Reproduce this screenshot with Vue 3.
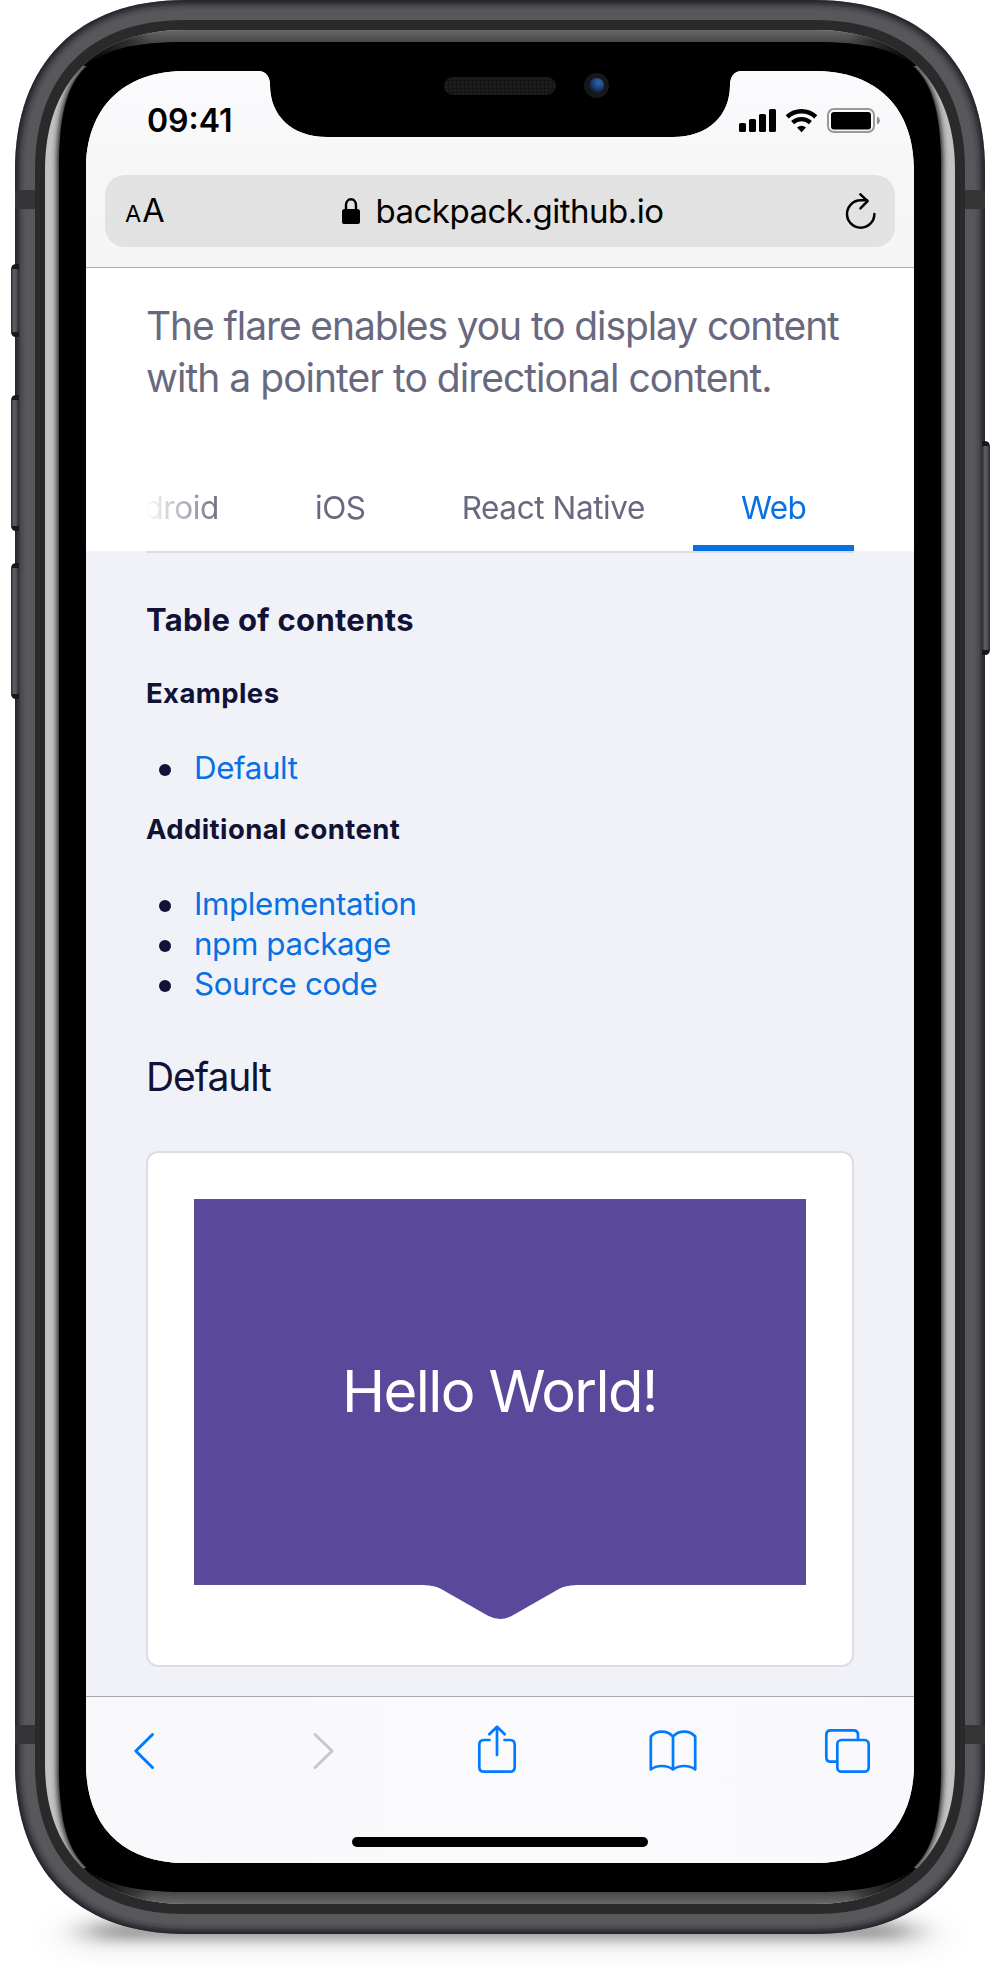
<script setup>
const tabs = ['Android', 'iOS', 'React Native', 'Web']
const activeTab = 'Web'
const additional = ['Implementation', 'npm package', 'Source code']

// Rounded rectangle with continuous-curvature corners: l is the corner's
// extent along x and y, k the distance of the handles from the corner.
function shape(x1, y1, x2, y2, lx, ly, k) {
  return [
    `M${x1 + lx} ${y1}H${x2 - lx}`,
    `C${x2 - k} ${y1} ${x2} ${y1 + k} ${x2} ${y1 + ly}`,
    `V${y2 - ly}`,
    `C${x2} ${y2 - k} ${x2 - k} ${y2} ${x2 - lx} ${y2}`,
    `H${x1 + lx}`,
    `C${x1 + k} ${y2} ${x1} ${y2 - k} ${x1} ${y2 - ly}`,
    `V${y1 + ly}`,
    `C${x1} ${y1 + k} ${x1 + k} ${y1} ${x1 + lx} ${y1}Z`,
  ].join('')
}
const body = shape(15, 0, 985, 1934, 170, 170, 63)
const ring = shape(35, 20, 965, 1914, 150, 150, 55)
const bezel = shape(45, 30, 955, 1904, 140, 140, 52)
const glass = shape(59, 42, 941, 1892, 126, 126, 27)
const buttons = [
  { x: 11, y: 264, h: 73 },
  { x: 11, y: 395, h: 136 },
  { x: 11, y: 563, h: 136 },
  { x: 982, y: 441, h: 214 },
]
</script>

<template>
  <div class="stage">
    <svg class="device" width="1004" height="1986" viewBox="0 0 1004 1986" aria-hidden="true">
      <defs>
        <filter id="soft" x="-5%" y="-5%" width="110%" height="110%"><feGaussianBlur stdDeviation="3" /></filter>
        <filter id="near" x="-10%" y="-200%" width="120%" height="500%"><feGaussianBlur stdDeviation="18 6" /></filter>
        <filter id="far" x="-10%" y="-200%" width="120%" height="500%"><feGaussianBlur stdDeviation="24 13" /></filter>
        <linearGradient id="topBand" gradientUnits="userSpaceOnUse" x1="0" y1="30" x2="0" y2="42">
          <stop offset="0" stop-color="#686868" /><stop offset="1" stop-color="#484848" />
        </linearGradient>
        <linearGradient id="bottomBand" gradientUnits="userSpaceOnUse" x1="0" y1="1892" x2="0" y2="1904">
          <stop offset="0" stop-color="#484848" /><stop offset="1" stop-color="#686868" />
        </linearGradient>
        <linearGradient id="fade" gradientUnits="userSpaceOnUse" x1="86" y1="0" x2="914" y2="0">
          <stop offset="0" stop-color="#000" /><stop offset=".08" stop-color="#000" stop-opacity="0" />
          <stop offset=".92" stop-color="#000" stop-opacity="0" /><stop offset="1" stop-color="#000" />
        </linearGradient>
        <linearGradient id="button">
          <stop offset="0" stop-color="#27272b" /><stop offset=".35" stop-color="#606068" />
          <stop offset=".65" stop-color="#505057" /><stop offset="1" stop-color="#2d2d31" />
        </linearGradient>
        <radialGradient id="lens" cx=".65" cy=".3" r=".75">
          <stop offset="0" stop-color="#2a69ac" /><stop offset=".5" stop-color="#1c4378" /><stop offset="1" stop-color="#0a1531" />
        </radialGradient>
        <pattern id="mesh" width="4" height="4" patternUnits="userSpaceOnUse">
          <rect width="4" height="4" fill="#1c1c1c" /><path d="M0 0H4M0 0V4" stroke="#121212" stroke-width="1.4" />
        </pattern>
        <clipPath id="bodyClip"><path :d="body" /></clipPath>
        <clipPath id="bezelClip"><path :d="bezel" /></clipPath>
      </defs>

      <rect x="92" y="1922" width="816" height="18" fill="#000" opacity=".32" filter="url(#near)" />
      <rect x="70" y="1920" width="860" height="28" fill="#000" opacity=".11" filter="url(#far)" />

      <path :d="body" fill="#58575c" />
      <g clip-path="url(#bodyClip)">
        <path :d="body" fill="none" stroke="#1c1c20" stroke-width="8" filter="url(#soft)" />
        <path d="M15 190H35V209H15ZM965 190H985V209H965ZM15 1725H35V1744H15ZM965 1725H985V1744H965Z" fill="#353537" />
      </g>
      <g v-for="b in buttons" :key="b.y">
        <path
          v-if="b.x < 500"
          :d="`M${b.x + 8} ${b.y}h-3q-5 0 -5 6v${b.h - 12}q0 6 5 6h3z`"
          fill="#18181a"
        />
        <path v-else :d="`M${b.x} ${b.y}h3q5 0 5 6v${b.h - 12}q0 6 -5 6h-3z`" fill="#18181a" />
        <rect :x="b.x" :y="b.y + 5" width="8" :height="b.h - 10" rx="2" fill="url(#button)" />
      </g>

      <path :d="ring" fill="#2a2a2b" />
      <path :d="bezel" fill="#c2c2c2" />
      <g clip-path="url(#bezelClip)">
        <path :d="glass" fill="#000" stroke="#000" stroke-width="3" filter="url(#soft)" />
        <path d="M84 66L60 20H940L916 66Z" fill="url(#topBand)" />
        <path d="M84 66L60 20H940L916 66Z" fill="url(#fade)" />
        <path d="M84 1868L60 1914H940L916 1868Z" fill="url(#bottomBand)" />
        <path d="M84 1868L60 1914H940L916 1868Z" fill="url(#fade)" />
      </g>
      <path :d="glass" fill="#000" />
      <rect x="444" y="77" width="112" height="18" rx="9" fill="url(#mesh)" />
      <circle cx="596.5" cy="85.5" r="12.5" fill="#171717" />
      <circle cx="596.5" cy="85.5" r="7.6" fill="url(#lens)" />
    </svg>

    <div class="screen">
      <header class="chrome">
        <div class="status">
          <span class="time">09:41</span>
          <svg class="indicators" width="142" height="26" viewBox="738 107 142 26">
            <rect x="739" y="123" width="7" height="9" rx="1.6" />
            <rect x="749" y="119" width="7" height="13" rx="1.6" />
            <rect x="759" y="114" width="7" height="18" rx="1.6" />
            <rect x="769" y="109" width="7" height="23" rx="1.6" />
            <g fill="none" stroke="#000" stroke-width="4.4">
              <path d="M787.2 116.9A21 21 0 0 1 815.8 116.9" />
              <path d="M792.6 122.6A13.2 13.2 0 0 1 810.4 122.6" />
            </g>
            <path d="M797 127.6Q801.5 124 806 127.6L801.5 132.2Z" />
            <rect x="828" y="109" width="46" height="23" rx="6" fill="none" stroke="#999" stroke-width="2" />
            <rect x="831" y="112" width="40" height="17.5" rx="3" />
            <path d="M877 116.5Q880 118 880 120.5T877 124.5Z" fill="#8e8e8e" />
          </svg>
        </div>
        <div class="address">
          <span class="reader"><small>A</small>A</span>
          <span class="host">
            <svg width="18" height="26" viewBox="0 0 18 26">
              <path d="M4 12V7.5C4 3.8 6 1.3 9 1.3S14 3.8 14 7.5V12" fill="none" stroke="#000" stroke-width="2.4" />
              <rect y="11" width="18" height="15" rx="2.6" />
            </svg>
            <b>backpack.github.io</b>
          </span>
          <svg class="reload" width="32" height="38" viewBox="845 192 32 38" fill="none" stroke="#000" stroke-width="2.5" stroke-linecap="round" stroke-linejoin="round">
            <path d="M874.4 214A13.7 13.7 0 1 1 860.7 200.3H867" />
            <path d="M860.4 194.3L867.6 201.2L860.4 208.4" />
          </svg>
        </div>
      </header>

      <main class="page">
        <section class="intro">
          <p><span>The flare enables you to display content</span><br />with a pointer to directional content.</p>
          <nav class="tabs">
            <a v-for="t in tabs" :key="t" :class="{ active: t === activeTab }">{{ t }}</a>
          </nav>
        </section>
        <section class="docs">
          <h2>Table of contents</h2>
          <h3 class="examples">Examples</h3>
          <ul><li><a>Default</a></li></ul>
          <h3 class="additional">Additional content</h3>
          <ul><li v-for="item in additional" :key="item"><a>{{ item }}</a></li></ul>
          <h1>Default</h1>
          <div class="card">
            <div class="flare">Hello World!</div>
            <svg class="pointer" width="160" height="34" viewBox="0 0 160 34">
              <path d="M0 0H160C151 0 144 1 138 4.5L92 30.8Q86 34 80 34T68 30.8L22 4.5C16 1 9 0 0 0Z" fill="#5a489b" />
            </svg>
          </div>
        </section>
      </main>

      <footer class="toolbar">
        <div class="actions">
          <svg viewBox="122 1724 48 50"><path d="M152.5 1734.5L135.8 1751L152.5 1767.5" stroke-width="3" /></svg>
          <svg class="disabled" viewBox="297.5 1724 48 50"><path d="M314.5 1734.5L331.6 1751L314.5 1767.5" stroke-width="3" /></svg>
          <svg viewBox="473 1724 48 50">
            <path d="M489.5 1740H484Q479.3 1740 479.3 1744.7V1767Q479.3 1771.7 484 1771.7H510Q514.7 1771.7 514.7 1767V1744.7Q514.7 1740 510 1740H504.5" />
            <path d="M497 1755V1727M489.3 1734.2L497 1726.8L504.7 1734.2" />
          </svg>
          <svg viewBox="648.5 1724 48 50">
            <path d="M672.5 1736.5Q668 1731.7 661.3 1731.7T650.3 1736.5V1769.5Q654.5 1766 661.3 1766T672.5 1769.5Q677 1766 683.7 1766T694.7 1769.5V1736.5Q690.4 1731.7 683.7 1731.7T672.5 1736.5V1769.5" />
          </svg>
          <svg viewBox="824 1724 48 50">
            <rect x="837.3" y="1740" width="31.4" height="31.7" rx="4.2" />
            <path d="M837 1761.7H830.8Q826.3 1761.7 826.3 1757.2V1735Q826.3 1730.4 830.8 1730.4H853.5Q858 1730.4 858 1735V1740" />
          </svg>
        </div>
        <div class="home"></div>
      </footer>
    </div>
  </div>
</template>

<style>
body {
  margin: 0;
  background: #fff;
}
</style>

<style scoped>
.stage {
  display: grid;
  width: 1004px;
  height: 1986px;
  overflow: hidden;
  font-family: Inter, "Liberation Sans", sans-serif;
}
.device,
.screen {
  grid-area: 1 / 1;
}
.screen {
  display: flex;
  flex-direction: column;
  width: 828px;
  height: 1792px;
  margin: 71px 0 0 86px;
  background: #f1f2f8;
  clip-path: path("M99 0H172C180 0 184 6 184 14C184 44 205 66 241 66H587C623 66 644 44 644 14C644 6 648 0 656 0H729C791 0 828 37 828 99V1693C828 1755 791 1792 729 1792H99C37 1792 0 1755 0 1693V99C0 37 37 0 99 0Z");
}
.chrome {
  height: 196px;
  border-bottom: 1px solid #adadad;
  background: linear-gradient(#fbfbfe, #f7f7f8 45%, #f5f5f6);
}
.status {
  display: flex;
  justify-content: space-between;
  height: 104px;
  padding: 0 34px 0 61px;
  box-sizing: border-box;
}
.time {
  padding-top: 30px;
  font-size: 32px;
  line-height: 40px;
  font-weight: 600;
  letter-spacing: 0;
}
.indicators {
  margin-top: 36px;
}
.address {
  display: flex;
  align-items: center;
  justify-content: space-between;
  height: 72px;
  margin: 0 19px;
  padding: 0 18px 0 20px;
  box-sizing: border-box;
  border-radius: 20px;
  background: #e2e2e3;
}
.reader {
  width: 60px;
  padding-top: 3px;
  font-size: 32.5px;
  line-height: 40px;
}
.reader small {
  margin-right: 1px;
  font-size: 23.5px;
}
.host {
  display: flex;
  align-items: center;
  gap: 15px;
  margin-right: 24px;
}
.host b {
  font-size: 33px;
  font-weight: 400;
  line-height: 40px;
  letter-spacing: -0.5px;
}
.host svg {
  margin-bottom: 1px;
}
.page {
  flex: 1;
  min-height: 0;
  overflow: hidden;
}
.intro {
  height: 283px;
  padding: 32px 60px 0;
  box-sizing: border-box;
  background: #fff;
  color: #68697f;
}
.intro p {
  margin: 0;
  font-size: 39px;
  line-height: 52px;
  letter-spacing: -0.97px;
  white-space: nowrap;
}
.intro p span {
  letter-spacing: -1.11px;
}
.tabs {
  display: flex;
  justify-content: flex-end;
  height: 92px;
  margin-top: 55px;
  overflow: hidden;
  mask-image: linear-gradient(90deg, transparent, #000 76px);
}
.tabs a {
  flex: none;
  padding: 24.5px 48px 0;
  font-size: 31.5px;
  line-height: 48px;
  letter-spacing: -0.4px;
}
.tabs .active {
  border-bottom: 6px solid #0770e3;
  color: #0770e3;
  letter-spacing: -0.7px;
}
.docs {
  padding: 0 60px;
  color: #111236;
}
.docs::before {
  content: "";
  display: block;
  height: 2px;
  background: #dddde5;
}
h1,
h2,
h3,
ul {
  margin: 0;
  padding: 0;
}
h2 {
  margin-top: 46.7px;
  font-size: 31px;
  line-height: 40px;
  letter-spacing: 0.3px;
}
h3 {
  font-size: 27.5px;
  line-height: 36px;
  letter-spacing: 0.4px;
}
.examples {
  margin-top: 35px;
}
.additional {
  margin-top: 22.3px;
}
ul {
  margin-top: 37.7px;
  list-style: none;
}
li {
  display: flex;
  align-items: center;
  gap: 23px;
  height: 40px;
  padding-left: 13px;
  font-size: 31.3px;
  line-height: 40px;
  letter-spacing: -0.38px;
}
li::before {
  content: "";
  width: 12px;
  height: 12px;
  margin-top: 4px;
  border-radius: 50%;
  background: #111236;
}
li a {
  color: #0770e3;
}
h1 {
  margin-top: 46.5px;
  font-size: 39px;
  line-height: 52px;
  font-weight: 400;
  letter-spacing: -1.1px;
}
.card {
  height: 516px;
  margin-top: 48px;
  padding: 46px;
  box-sizing: border-box;
  border: 2px solid #dddde5;
  border-radius: 12px;
  background: #fff;
}
.flare {
  display: flex;
  align-items: center;
  justify-content: center;
  height: 386px;
  padding: 0 1px 2px 0;
  box-sizing: border-box;
  background: #5a489b;
  color: #fff;
  font-size: 58px;
  letter-spacing: -1.6px;
}
.pointer {
  display: block;
  margin: 0 auto;
}
.toolbar {
  height: 167px;
  box-sizing: border-box;
  padding: 27px 42px 0 36px;
  border-top: 1px solid #a6a8ae;
  background: linear-gradient(90deg, #f8f8fb, #fafafc 50%, #f9f9fd);
}
.actions {
  display: flex;
  justify-content: space-between;
}
.actions svg {
  width: 48px;
  height: 50px;
  fill: none;
  stroke: #007aff;
  stroke-width: 2.7;
  stroke-linecap: round;
  stroke-linejoin: round;
}
.actions .disabled {
  stroke: #c8c8cc;
}
.home {
  width: 296px;
  height: 10px;
  margin: 63px 0 0 230px;
  border-radius: 5px;
  background: #000;
}
</style>
